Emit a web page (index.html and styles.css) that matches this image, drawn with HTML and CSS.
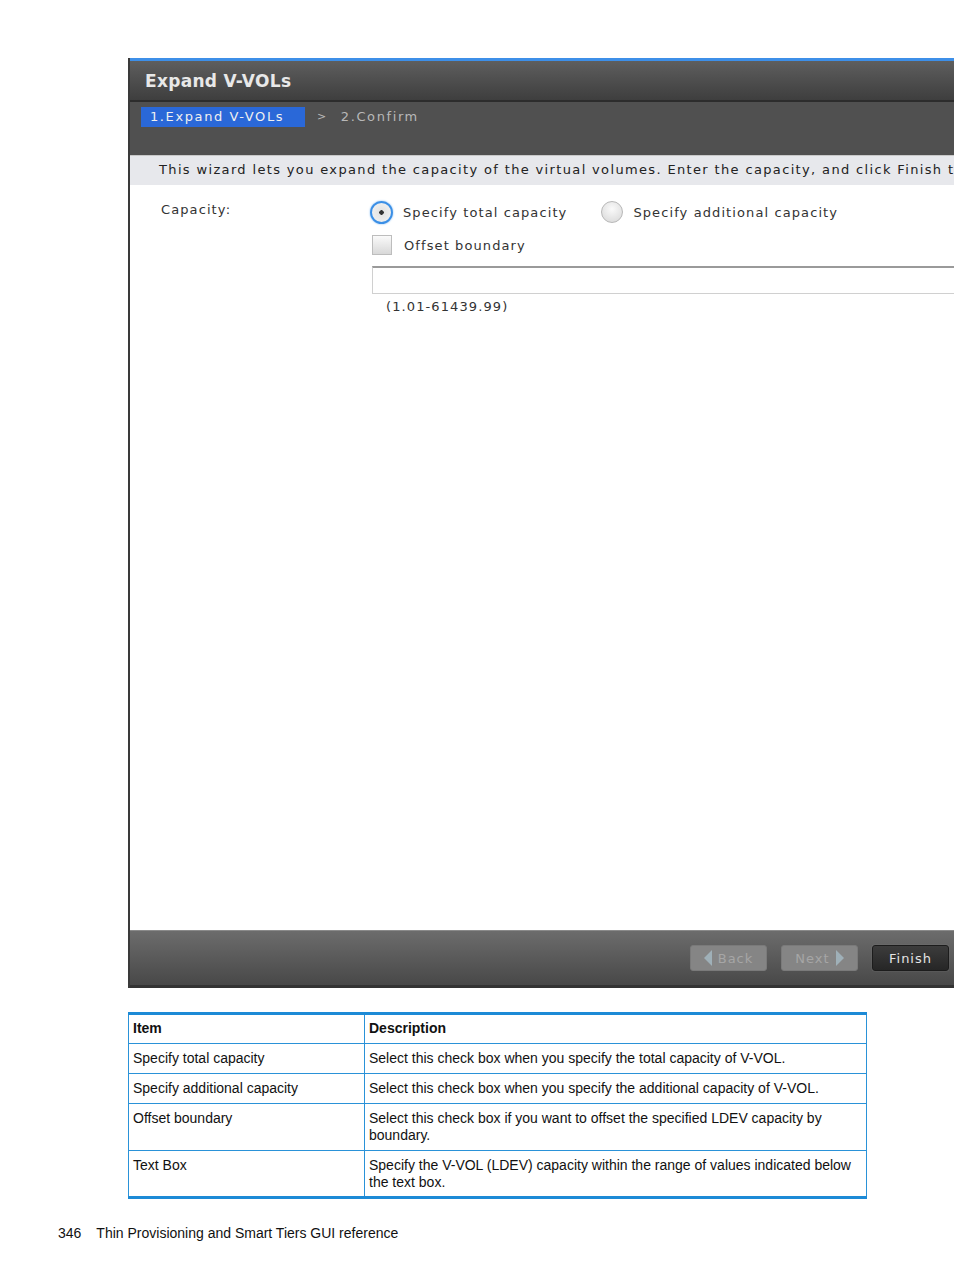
FILE: index.html
```html
<!DOCTYPE html>
<html lang="en">
<head>
    <meta charset="UTF-8">
    <title>Expand V-VOLs</title>
    <link rel="stylesheet" href="styles.css">
</head>
<body>
    <div class="page">
        <div class="wizard">
            <div class="titlebar">Expand V-VOLs</div>
            <div class="steps">
                <span class="step active">1.Expand V-VOLs</span>
                <span class="sep">&gt;</span>
                <span class="step">2.Confirm</span>
            </div>
            <div class="info">This wizard lets you expand the capacity of the virtual volumes. Enter the capacity, and click Finish to confirm.</div>
            <div class="content">
                <div class="field-label">Capacity:</div>
                <div class="field">
                    <div class="row">
                        <span class="radio checked"></span>
                        <span class="opt">Specify total capacity</span>
                        <span class="radio"></span>
                        <span class="opt">Specify additional capacity</span>
                    </div>
                    <div class="row">
                        <span class="check"></span>
                        <span class="opt">Offset boundary</span>
                    </div>
                    <input class="textbox" type="text">
                    <div class="range">(1.01-61439.99)</div>
                </div>
            </div>
            <div class="footer">
                <button class="btn off"><span class="tri left"></span>Back</button>
                <button class="btn off">Next<span class="tri right"></span></button>
                <button class="btn finish">Finish</button>
            </div>
        </div>

        <table class="ref">
            <tr>
                <th class="c1">Item</th>
                <th>Description</th>
            </tr>
            <tr>
                <td class="c1">Specify total capacity</td>
                <td>Select this check box when you specify the total capacity of V-VOL.</td>
            </tr>
            <tr>
                <td class="c1">Specify additional capacity</td>
                <td>Select this check box when you specify the additional capacity of V-VOL.</td>
            </tr>
            <tr>
                <td class="c1">Offset boundary</td>
                <td>Select this check box if you want to offset the specified LDEV capacity by boundary.</td>
            </tr>
            <tr>
                <td class="c1">Text Box</td>
                <td>Specify the V-VOL (LDEV) capacity within the range of values indicated below the text box.</td>
            </tr>
        </table>

        <div class="pagefoot"><span class="num">346</span>Thin Provisioning and Smart Tiers GUI reference</div>
    </div>
</body>
</html>
```

FILE: styles.css
```css
body {
    margin: 0;
    background: white;
    overflow-x: hidden;
}

.page {
    padding-top: 58px;
    width: 954px;
}

/* wizard screenshot */
.wizard {
    margin-left: 128px;
    width: 826px;
    height: 930px;
    display: flex;
    flex-direction: column;
    border-left: 2px solid #3a3a3a;
    box-sizing: border-box;
    font-family: "DejaVu Sans", Verdana, sans-serif;
    overflow: hidden;
}

.titlebar {
    height: 39px;
    border-top: 3px solid #3d8fe8;
    background: linear-gradient(#5e5e5e, #3e3e3e);
    border-bottom: 2px solid #2c2c2c;
    color: #e8e8e8;
    font-size: 17px;
    font-weight: bold;
    padding-left: 15px;
    line-height: 40px;
    letter-spacing: 0.3px;
}

.steps {
    height: 53px;
    background: #505050;
    padding: 5px 0 0 11px;
    box-sizing: border-box;
    display: flex;
    align-items: flex-start;
    font-size: 13px;
    color: #b8b8b8;
    letter-spacing: 1.6px;
}

.step {
    height: 20px;
    line-height: 19px;
}

.step.active {
    background: #2a68d8;
    color: #f0f0f0;
    width: 164px;
    padding-left: 9px;
    box-sizing: border-box;
}

.sep {
    line-height: 19px;
    margin: 0 13px 0 12px;
    font-size: 11px;
}

.info {
    height: 30px;
    background: #e7e8ec;
    border-top: 1px solid #c8c8c8;
    box-sizing: border-box;
    padding-left: 29px;
    line-height: 28px;
    font-size: 13px;
    color: #222;
    letter-spacing: 1.35px;
    white-space: nowrap;
}

.content {
    flex: 1;
    background: white;
    display: flex;
    padding-top: 15px;
    font-size: 13px;
    color: #333;
    letter-spacing: 1.1px;
}

.field-label {
    width: 240px;
    box-sizing: border-box;
    padding-left: 31px;
    padding-top: 2px;
}

.field {
    flex: 1;
}

.row {
    display: flex;
    align-items: center;
    height: 24px;
    margin-bottom: 9px;
}

.radio {
    width: 22px;
    height: 22px;
    border-radius: 50%;
    border: 1px solid #b8b8b8;
    background: radial-gradient(circle at 50% 35%, #fafafa, #d6d6d6);
    box-sizing: border-box;
    margin-right: 10px;
}

.radio.checked {
    width: 23px;
    height: 23px;
    border: 2px solid #3b8fe6;
    box-shadow: 0 0 2px #7ab6f2;
    background: radial-gradient(circle, #333 2px, #e4e4e4 2.5px, #f4f4f4);
    margin-right: 10px;
}

.radio + .opt {
    margin-right: 34px;
}

.check {
    width: 20px;
    height: 20px;
    border: 1px solid #bdbdbd;
    background: linear-gradient(#fafafa, #d8d8d8);
    box-sizing: border-box;
    margin-left: 2px;
    margin-right: 12px;
}

.textbox {
    display: block;
    margin: 0 0 0 2px;
    width: 100%;
    height: 28px;
    border: 1px solid #d0d0d0;
    border-top: 2px solid #9a9a9a;
    box-sizing: border-box;
}

.range {
    padding-left: 16px;
    margin-top: 5px;
}

.footer {
    height: 58px;
    background: linear-gradient(#6c6c6c, #484848);
    border-top: 1px solid #8a8a8a;
    border-bottom: 3px solid #333;
    box-sizing: border-box;
    display: flex;
    justify-content: flex-end;
    align-items: center;
    gap: 14px;
    padding-right: 5px;
}

.btn {
    width: 77px;
    height: 26px;
    border-radius: 3px;
    font-family: "DejaVu Sans", Verdana, sans-serif;
    font-size: 13px;
    letter-spacing: 1px;
    display: flex;
    align-items: center;
    justify-content: center;
    gap: 6px;
    padding: 0;
}

.btn.off {
    background: #858585;
    border: 1px solid #7a7a7a;
    color: #a6a6a6;
}

.btn.finish {
    background: linear-gradient(#3c3c3c, #262626);
    border: 1px solid #1c1c1c;
    color: #e4e4e4;
    box-shadow: 0 0 1px #999;
}

.tri {
    width: 0;
    height: 0;
    border-top: 8px solid transparent;
    border-bottom: 8px solid transparent;
}

.tri.left {
    border-right: 8px solid #9fb0b8;
}

.tri.right {
    border-left: 8px solid #9fb0b8;
}

/* reference table */
.ref {
    margin: 24px 0 0 128px;
    width: 739px;
    border-collapse: collapse;
    font-family: "Liberation Sans", Arial, sans-serif;
    font-size: 14px;
    color: #111;
    border-top: 3px solid #1c8ad6;
    border-bottom: 3px solid #1c8ad6;
}

.ref th,
.ref td {
    border: 1px solid #2a92d8;
    text-align: left;
    vertical-align: top;
    padding: 6px 4px 6px 4px;
    line-height: 17px;
}

.ref th {
    font-weight: bold;
    padding: 5px 4px 6px 4px;
}

.ref .c1 {
    width: 227px;
}

.ref tr:first-child th {
    border-top: none;
}

.ref tr:last-child td {
    border-bottom: none;
    padding-bottom: 5px;
}

.pagefoot {
    margin: 26px 0 0 58px;
    font-family: "Liberation Sans", Arial, sans-serif;
    font-size: 14px;
    color: #111;
}

.num {
    margin-right: 15px;
}
```
